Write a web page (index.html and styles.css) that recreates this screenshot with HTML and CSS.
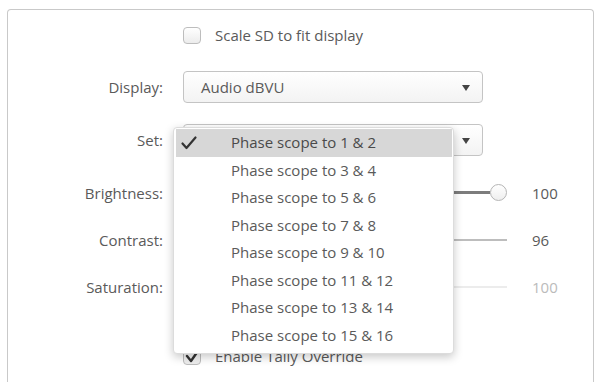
FILE: index.html
```html
<!DOCTYPE html>
<html lang="en">
<head>
  <meta charset="UTF-8" />
  <title>Scope Settings</title>
  <link rel="stylesheet" href="styles.css">
</head>
<body>
  <div class="panel">
    <div class="row row-check">
      <span></span>
      <label class="check"><span class="box"></span>Scale SD to fit display</label>
    </div>

    <div class="row row-display">
      <span class="label">Display:</span>
      <div class="dropdown">Audio dBVU<span class="arrow"></span></div>
    </div>

    <div class="row row-set">
      <span class="label">Set:</span>
      <div class="dropdown"><span class="arrow"></span>
        <!-- open list covers the current value -->
        <div class="menu">
          <div class="menu-item selected">
            <svg class="tick" width="16" height="14" viewBox="0 0 16 14"><path d="M1.5 7.5 L5.5 12 L14.5 1.5" fill="none" stroke="#333" stroke-width="2.2" stroke-linecap="round" stroke-linejoin="round"/></svg>
            Phase scope to 1 &amp; 2
          </div>
          <div class="menu-item">Phase scope to 3 &amp; 4</div>
          <div class="menu-item">Phase scope to 5 &amp; 6</div>
          <div class="menu-item">Phase scope to 7 &amp; 8</div>
          <div class="menu-item">Phase scope to 9 &amp; 10</div>
          <div class="menu-item">Phase scope to 11 &amp; 12</div>
          <div class="menu-item">Phase scope to 13 &amp; 14</div>
          <div class="menu-item">Phase scope to 15 &amp; 16</div>
        </div>
      </div>
    </div>

    <div class="row row-slider">
      <span class="label">Brightness:</span>
      <div class="slider">
        <div class="track track-dark"></div>
        <span class="knob"></span>
        <span class="value">100</span>
      </div>
    </div>

    <div class="row row-slider">
      <span class="label">Contrast:</span>
      <div class="slider">
        <div class="track track-light"></div>
        <span class="value">96</span>
      </div>
    </div>

    <div class="row row-slider">
      <span class="label">Saturation:</span>
      <div class="slider">
        <div class="track track-faint"></div>
        <span class="value value-disabled">100</span>
      </div>
    </div>

    <div class="row row-check row-tally">
      <span></span>
      <label class="check"><span class="box">
        <svg class="tick-box" width="16" height="15" viewBox="0 0 16 15"><path d="M2 8 L6 13 L14 1.5" fill="none" stroke="#333" stroke-width="2.4" stroke-linecap="round" stroke-linejoin="round"/></svg>
      </span>Enable Tally Override</label>
    </div>
  </div>
</body>
</html>
```

FILE: styles.css
```css
* { margin:0; padding:0; box-sizing:border-box; }
body {
  font-family:"Open Sans", "Liberation Sans", sans-serif;
  font-size:15px; color:#5a5a5a;
  background:#fff;
  height:382px; overflow:hidden;
}
.panel {
  margin:9px 6px 0 7px; height:400px;
  border:1px solid #c9c9c9; border-bottom:none;
  border-radius:4px 4px 0 0;
  padding-top:15px;
  display:flex; flex-direction:column;
}
.row {
  display:grid; grid-template-columns:155px 1fr;
  column-gap:20px; align-items:center;
}
.label { text-align:right; }

.row-check { height:20px; }
.check { display:flex; align-items:center; gap:14px; }
.box {
  width:18px; height:17px; position:relative;
  border:1px solid #bdbdbd; border-radius:4px;
  background:linear-gradient(#fff,#ececec);
}
.tick-box { position:absolute; left:1px; top:-1px; }

.row-display { margin-top:26px; height:32px; }
.row-set { margin-top:21px; height:32px; margin-bottom:6px; }
.row-slider { margin-top:14px; height:33px; }
.row-tally { margin-top:43px; }

.dropdown {
  position:relative; width:300px; height:32px;
  border:1px solid #c4c4c4; border-radius:4px;
  background:linear-gradient(#fff,#f3f3f3);
  padding-left:17px; display:flex; align-items:center;
}
.arrow {
  position:absolute; right:12px; top:13px;
  border-left:4.5px solid transparent; border-right:4.5px solid transparent;
  border-top:6px solid #444;
}

.menu {
  position:absolute; left:-11px; top:2px;
  width:281px; padding:1px 1px 4px 2px;
  background:#fff; border:1px solid #dcdcdc; border-radius:4px;
  box-shadow:0 3px 10px rgba(0,0,0,0.22);
  z-index:5;
}
.menu-item {
  position:relative; height:27.5px; line-height:27.5px;
  padding-left:55px;
}
.menu-item.selected { background:#d7d7d7; color:#4a4a4a; }
.tick { position:absolute; left:5px; top:7px; }

.slider { display:flex; align-items:center; }
.track { width:307px; }
.track-dark { height:3px; background:#7c7c7c; }
.track-light { width:324px; height:2px; background:#bdbdbd; }
.track-faint { width:324px; height:2px; background:#ececec; }
.knob {
  width:17px; height:17px; border-radius:50%;
  border:1px solid #b5b5b5; background:linear-gradient(#fff,#eee);
}
.value { margin-left:25px; }
.value-disabled { color:#bbb; }
```
